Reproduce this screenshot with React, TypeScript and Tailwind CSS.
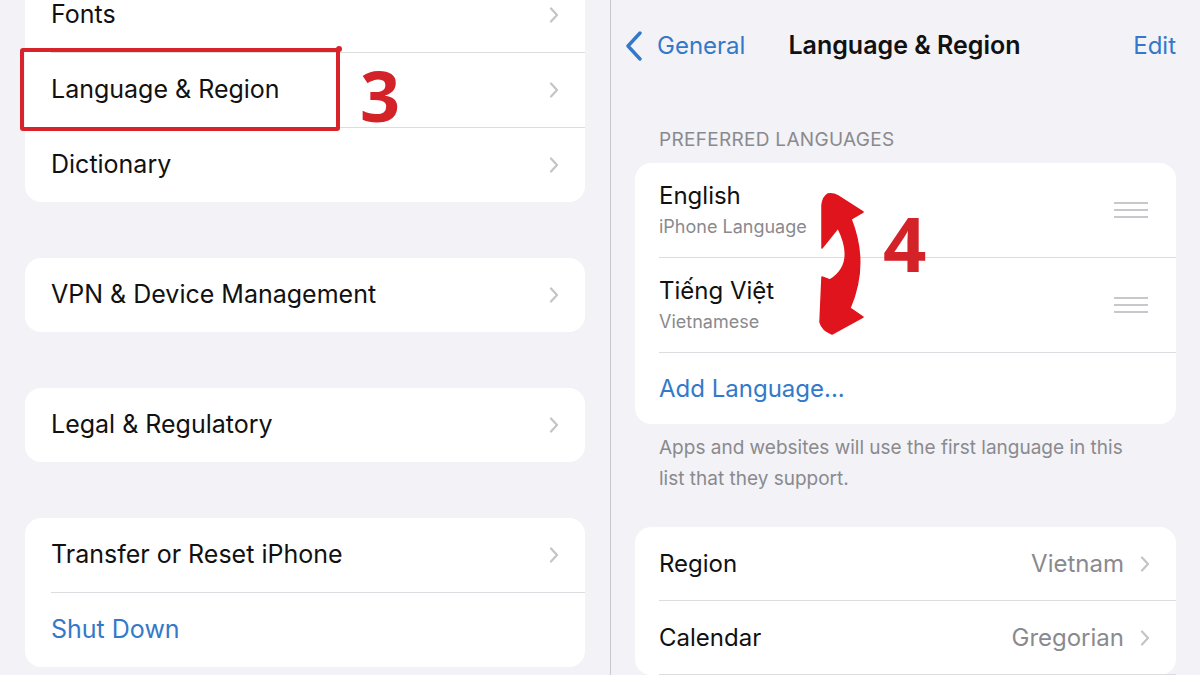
import React from "react";

const Chevron = () => (
  <svg width="10" height="16" viewBox="0 0 10 16" className="shrink-0">
    <path d="M2 1.5 L8 8 L2 14.5" fill="none" stroke="#c4c4c7" strokeWidth="2.2" strokeLinecap="round" strokeLinejoin="round" />
  </svg>
);

const DragHandle = () => (
  <svg width="34" height="16" viewBox="0 0 34 16" className="shrink-0">
    <path d="M0 1 H34 M0 8 H34 M0 15 H34" stroke="#c7c7cc" strokeWidth="2" />
  </svg>
);

const Row = ({ label, blue, last }: { label: string; blue?: boolean; last?: boolean }) => (
  <div className={`ml-[26px] pr-[26px] flex items-center justify-between ${last ? "h-[74px]" : "h-[75px] border-b border-[#dcdce0]"}`}>
    <span className={`text-[25px] ${blue ? "text-[#3479c9]" : "text-[#111]"}`}>{label}</span>
    {!blue && <Chevron />}
  </div>
);

const LeftPanel = () => (
  <div className="relative w-[610px] shrink-0 px-[25px] flex flex-col gap-[56px]">
    <div className="bg-white rounded-[16px] -mt-[22px]">
      <Row label="Fonts" />
      <Row label="Language & Region" />
      <Row label="Dictionary" last />
    </div>
    <div className="bg-white rounded-[16px]">
      <Row label="VPN & Device Management" last />
    </div>
    <div className="bg-white rounded-[16px]">
      <Row label="Legal & Regulatory" last />
    </div>
    <div className="bg-white rounded-[16px]">
      <Row label="Transfer or Reset iPhone" />
      <Row label="Shut Down" blue last />
    </div>

    {/* annotation: step 3 */}
    <div className="absolute left-[20px] top-[48px] w-[320px] h-[83px] border-[4px] border-[#d8232a] rounded-[3px]" />
    <div className="absolute left-[336px] top-[46px] w-[6px] h-[6px] rounded-full bg-[#d8232a]" />
    <span className="absolute left-[360px] top-[50px] text-[70px] leading-[90px] font-bold text-[#d42229] font-['Open_Sans',sans-serif]">3</span>
  </div>
);

const LangRow = ({ name, sub }: { name: string; sub: string }) => (
  <div className="h-[95px] ml-[24px] pr-[28px] flex items-center justify-between border-b border-[#dcdce0]">
    <div className="flex flex-col gap-[4px]">
      <span className="text-[24px] leading-[30px] text-[#111]">{name}</span>
      <span className="text-[18px] leading-[24px] text-[#8a8a8e]">{sub}</span>
    </div>
    <DragHandle />
  </div>
);

const ValueRow = ({ label, value }: { label: string; value: string }) => (
  <div className="h-[74px] ml-[24px] pr-[26px] flex items-center justify-between border-b border-[#dcdce0]">
    <span className="text-[24px] text-[#111]">{label}</span>
    <div className="flex items-center gap-[16px]">
      <span className="text-[24px] text-[#8a8a8e]">{value}</span>
      <Chevron />
    </div>
  </div>
);

const RightPanel = () => (
  <div className="relative flex-1 border-l border-[#c8c8cc] px-[24px]">
    <div className="h-[92px] grid grid-cols-[1fr_auto_1fr] items-center -ml-[10px]">
      <div className="flex items-center gap-[14px]">
        <svg width="18" height="30" viewBox="0 0 18 30">
          <path d="M15 2 L3 15 L15 28" fill="none" stroke="#3479c9" strokeWidth="3.4" strokeLinecap="round" strokeLinejoin="round" />
        </svg>
        <span className="text-[24px] text-[#3479c9]">General</span>
      </div>
      <span className="text-[25px] font-semibold text-[#111] ml-[8px]">Language &amp; Region</span>
      <span className="text-[24px] text-[#3479c9] justify-self-end">Edit</span>
    </div>
    <div className="pt-[37px] pb-[10px] pl-[24px] text-[19px] leading-[22px] text-[#8a8a8e] tracking-[0.3px]">PREFERRED LANGUAGES</div>
    <div className="bg-white rounded-[16px] mt-[2px]">
      <LangRow name="English" sub="iPhone Language" />
      <LangRow name="Tiếng Việt" sub="Vietnamese" />
      <div className="h-[71px] pl-[24px] flex items-center">
        <span className="text-[24px] text-[#3479c9]">Add Language...</span>
      </div>
    </div>
    <p className="pl-[24px] pr-[10px] pt-[8px] text-[19px] leading-[31px] text-[#8a8a8e]">
      Apps and websites will use the first language in this
      <br />
      list that they support.
    </p>
    <div className="bg-white rounded-[16px] mt-[33px]">
      <ValueRow label="Region" value="Vietnam" />
      <ValueRow label="Calendar" value="Gregorian" />
    </div>

    {/* annotation: step 4 */}
    <svg className="absolute left-[189px] top-[180px]" width="80" height="170" viewBox="0 0 80 170">
      <path
        d="M28 14 Q33 13 38 16 L63 32 L51 39 Q69 84 50 128 L63 137 L32 154 Q22 150 20 142 L22 97 L30 100 Q56 84 38 48 L22 68 L22 25 Q23 17 28 14 Z"
        fill="#e0141c"
        stroke="#e0141c"
        strokeWidth="1.5"
        strokeLinejoin="round"
      />
    </svg>
    <span className="absolute left-[272px] top-[198px] text-[76px] leading-[90px] font-bold text-[#d42229] font-['Open_Sans',sans-serif]">4</span>
  </div>
);

export default function App() {
  return (
    <div className="w-[1200px] h-[675px] overflow-hidden bg-[#f2f2f7] flex font-['Inter','Noto_Sans',sans-serif]">
      <LeftPanel />
      <RightPanel />
    </div>
  );
}
